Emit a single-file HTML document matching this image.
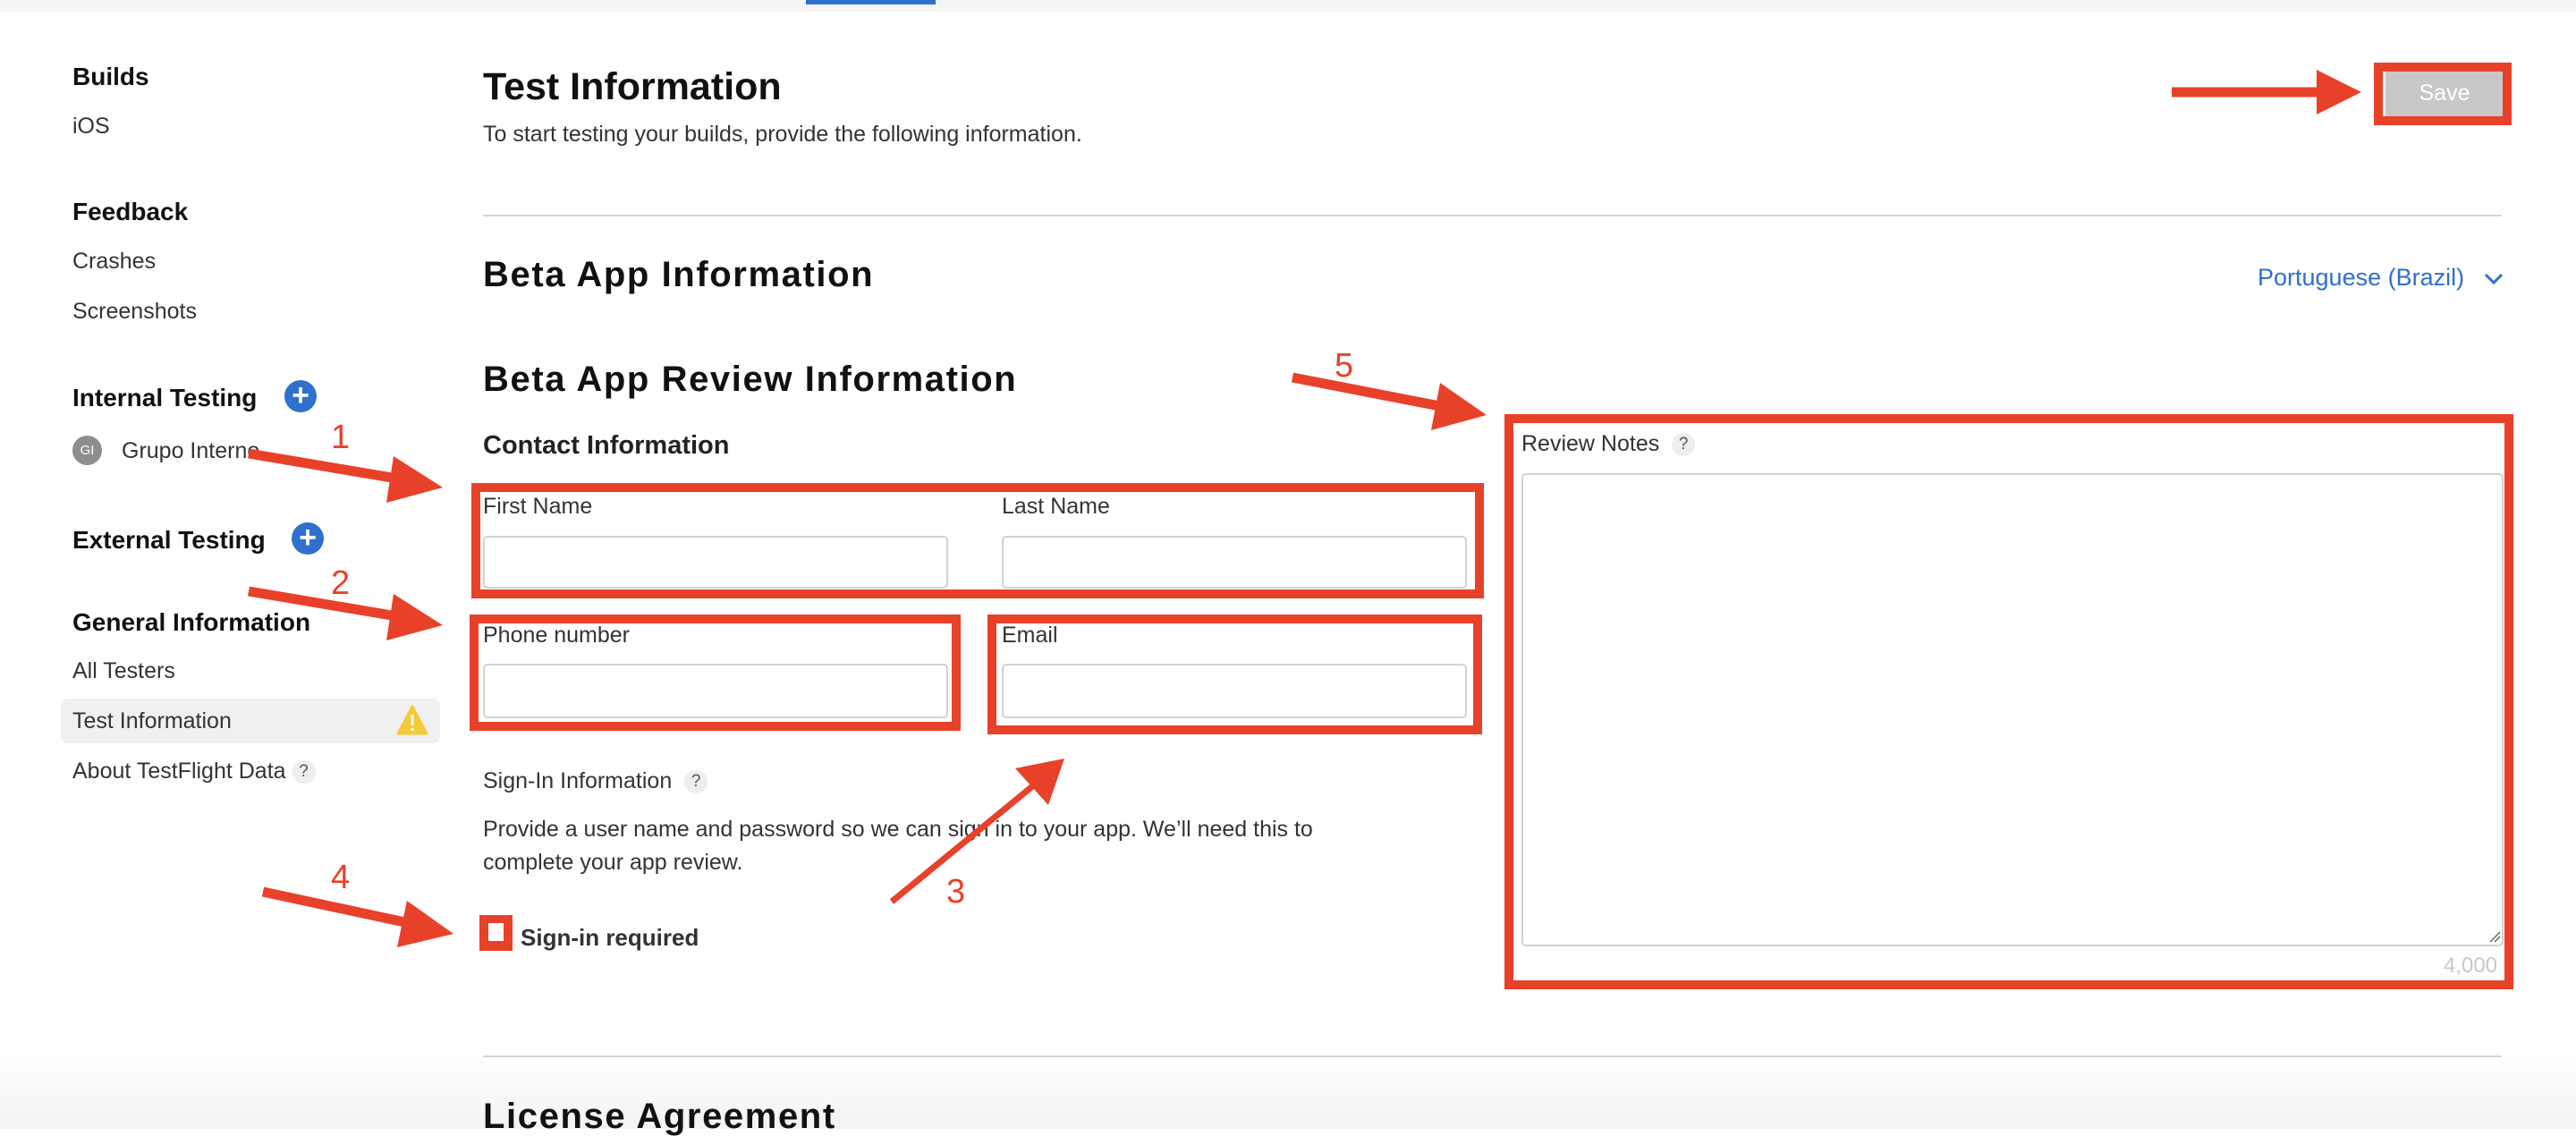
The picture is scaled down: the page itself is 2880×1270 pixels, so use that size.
<!DOCTYPE html>
<html><head><meta charset="utf-8"><style>
*{margin:0;padding:0;box-sizing:border-box}
body{width:2880px;height:1262px;overflow:hidden;background:#fff;font-family:"Liberation Sans",Arial,sans-serif;color:#1d1d1f;position:relative}
.a{position:absolute;white-space:nowrap;line-height:1}
.sh{font-size:28px;font-weight:bold;color:#111}
.si{font-size:25px;color:#333}
.plus{position:absolute;width:36px;height:36px;border-radius:50%;background:#2f6fce;color:#fff;font-size:34px;line-height:34px;text-align:center;font-weight:bold}
.q{display:inline-block;width:26px;height:26px;border-radius:50%;background:#eee;color:#555;font-size:19px;line-height:26px;text-align:center;vertical-align:middle}
.lbl{font-size:25px;color:#333}
.inp{position:absolute;border:2px solid #d2d2d2;border-radius:5px;background:#fff}
.red{position:absolute;border:10px solid #e8412a}
.h2{font-size:40px;font-weight:bold;letter-spacing:1.6px;color:#111}
.num{position:absolute;color:#e8412a;font-size:38px;line-height:1;font-weight:300}
</style></head><body>
<div style="position:absolute;left:0;top:0;width:2880px;height:13px;background:#f5f5f7"></div>
<div style="position:absolute;left:901px;top:0;width:145px;height:5px;background:#2f6fce"></div>

<!-- Sidebar -->
<div class="a sh" style="left:81px;top:72px">Builds</div>
<div class="a si" style="left:81px;top:129px">iOS</div>
<div class="a sh" style="left:81px;top:223px">Feedback</div>
<div class="a si" style="left:81px;top:280px">Crashes</div>
<div class="a si" style="left:81px;top:336px">Screenshots</div>
<div class="a sh" style="left:81px;top:431px">Internal Testing</div>
<div class="plus" style="left:318px;top:425px">+</div>
<div style="position:absolute;left:81px;top:487px;width:33px;height:33px;border-radius:50%;background:#8e8e8e;color:#fff;font-size:15px;line-height:33px;text-align:center">GI</div>
<div class="a si" style="left:136px;top:492px">Grupo Interno</div>
<div class="a sh" style="left:81px;top:590px">External Testing</div>
<div class="plus" style="left:326px;top:584px">+</div>
<div class="a sh" style="left:81px;top:682px">General Information</div>
<div class="a si" style="left:81px;top:738px">All Testers</div>
<div style="position:absolute;left:68px;top:781px;width:424px;height:50px;border-radius:8px;background:#f0f0f0"></div>
<div class="a si" style="left:81px;top:794px">Test Information</div>
<svg style="position:absolute;left:443px;top:788px" width="36" height="34" viewBox="0 0 36 34"><path d="M18 2 L34 32 L2 32 Z" fill="#f5c93a" stroke="#f5c93a" stroke-width="3" stroke-linejoin="round"/><rect x="16.5" y="11" width="3" height="12" fill="#fff"/><circle cx="18" cy="27.5" r="1.8" fill="#fff"/></svg>
<div class="a si" style="left:81px;top:850px">About TestFlight Data <span class="q">?</span></div>

<!-- Main -->
<div class="a" style="left:540px;top:76px;font-size:43px;font-weight:bold;color:#111">Test Information</div>
<div class="a" style="left:540px;top:138px;font-size:25px;color:#333">To start testing your builds, provide the following information.</div>
<div style="position:absolute;left:2667px;top:79px;width:132px;height:51px;background:#c8c8c8;color:#fff;font-size:25px;line-height:51px;text-align:center">Save</div>
<div class="red" style="left:2654px;top:70px;width:154px;height:70px"></div>
<div style="position:absolute;left:540px;top:240px;width:2257px;height:2px;background:#d5d5d5"></div>
<div class="a h2" style="left:540px;top:287px">Beta App Information</div>
<div class="a" style="left:2524px;top:297px;font-size:27px;color:#2f6fce">Portuguese (Brazil)</div>
<svg style="position:absolute;left:2776px;top:304px" width="24" height="16"><path d="M3 3 L12 12 L21 3" fill="none" stroke="#2f6fce" stroke-width="3"/></svg>
<div class="a h2" style="left:540px;top:404px">Beta App Review Information</div>
<div class="a" style="left:540px;top:484px;font-size:29px;font-weight:bold;color:#222">Contact Information</div>

<div class="a lbl" style="left:540px;top:554px">First Name</div>
<div class="inp" style="left:540px;top:599px;width:520px;height:59px"></div>
<div class="a lbl" style="left:1120px;top:554px">Last Name</div>
<div class="inp" style="left:1120px;top:599px;width:520px;height:59px"></div>
<div class="red" style="left:527px;top:540px;width:1132px;height:129px"></div>

<div class="a lbl" style="left:540px;top:698px">Phone number</div>
<div class="inp" style="left:540px;top:742px;width:520px;height:61px"></div>
<div class="red" style="left:525px;top:687px;width:549px;height:130px"></div>
<div class="a lbl" style="left:1120px;top:698px">Email</div>
<div class="inp" style="left:1120px;top:742px;width:520px;height:61px"></div>
<div class="red" style="left:1104px;top:687px;width:553px;height:134px"></div>

<div class="a lbl" style="left:540px;top:861px">Sign-In Information &nbsp;<span class="q">?</span></div>
<div class="a" style="left:540px;top:909px;font-size:25px;color:#333;line-height:37px;white-space:normal;width:1020px">Provide a user name and password so we can sign in to your app. We’ll need this to complete your app review.</div>
<div style="position:absolute;left:536px;top:1023px;width:37px;height:40px;background:#e8412a"></div>
<div style="position:absolute;left:546px;top:1032px;width:17px;height:20px;background:#fff"></div>
<div class="a" style="left:582px;top:1035px;font-size:26px;font-weight:bold;color:#333">Sign-in required</div>

<div class="a lbl" style="left:1701px;top:484px">Review Notes &nbsp;<span class="q">?</span></div>
<div class="inp" style="left:1701px;top:529px;width:1098px;height:529px"></div>
<svg style="position:absolute;left:2782px;top:1040px" width="14" height="14"><path d="M2 13 L13 2 M7 13 L13 7" stroke="#666" stroke-width="1.5"/></svg>
<div class="a" style="left:2732px;top:1068px;font-size:24px;color:#c8c8c8">4,000</div>
<div class="red" style="left:1682px;top:463px;width:1128px;height:643px"></div>

<div style="position:absolute;left:540px;top:1180px;width:2257px;height:2px;background:#d5d5d5"></div>
<div style="position:absolute;left:0;top:1182px;width:2880px;height:80px;background:linear-gradient(#fff,#f3f3f3)"></div>
<div class="a h2" style="left:540px;top:1228px">License Agreement</div>

<!-- arrows -->
<svg style="position:absolute;left:0;top:0" width="2880" height="1262">
<g stroke="#e8412a" stroke-width="11" fill="#e8412a">
<line x1="2428" y1="103" x2="2595" y2="103"/><polygon points="2590,78 2640,103 2590,128" stroke="none"/>
<line x1="278" y1="507" x2="450" y2="536"/><polygon points="440,510 495,545 432,562" stroke="none"/>
<line x1="278" y1="661" x2="450" y2="690"/><polygon points="440,664 495,699 432,716" stroke="none"/>
<line x1="294" y1="997" x2="462" y2="1033"/><polygon points="455,1007 507,1044 444,1059" stroke="none"/>
<line x1="1445" y1="422" x2="1615" y2="455"/><polygon points="1610,428 1662,464 1600,481" stroke="none"/>
<line x1="997" y1="1008" x2="1158" y2="876" stroke-width="7"/><polygon points="1135,859 1190,848 1172,900" stroke="none"/>
</g></svg>
<div class="num" style="left:370px;top:470px">1</div>
<div class="num" style="left:370px;top:633px">2</div>
<div class="num" style="left:1058px;top:978px">3</div>
<div class="num" style="left:370px;top:962px">4</div>
<div class="num" style="left:1492px;top:390px">5</div>
</body></html>
